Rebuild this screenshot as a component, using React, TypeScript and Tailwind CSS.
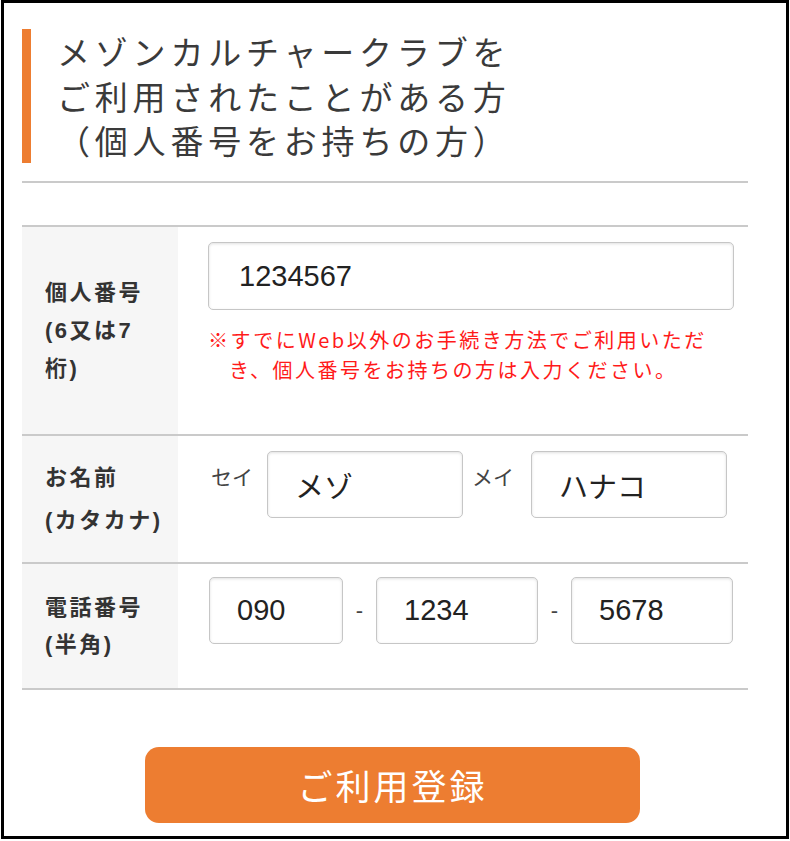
export default function App() {
  const inputCls =
    "h-[67px] rounded-[5px] border border-[#c6c6c6] bg-white pl-[27px] text-[29px] text-[#222] shadow-[inset_0_1px_3px_rgba(0,0,0,0.12)] outline-none";

  return (
    <div className="w-[790px] h-[841px] bg-white font-['Liberation_Sans','Noto_Sans_CJK_JP',sans-serif]">
      <div className="ml-[1px] w-[788px] h-[839px] border-[3px] border-black">
        <div className="ml-[18px] w-[726px] pt-[26px]">
          {/* Title */}
          <div className="flex">
            <div className="w-[9px] bg-[#ed7d31]" />
            <h1 className="pl-[26px] text-[33px] leading-[44.7px] tracking-[4.8px] text-[#3a3a3a] font-normal font-['Noto_Sans_CJK_JP',sans-serif]">
              メゾンカルチャークラブを
              <br />
              ご利用されたことがある方
              <br />
              （個人番号をお持ちの方）
            </h1>
          </div>
          <div className="mt-[18px] h-[2px] bg-[#cacaca]" />

          {/* Form table */}
          <div className="mt-[42px] border-t-2 border-[#cacaca]">
            {/* 個人番号 */}
            <div className="flex h-[209px] border-b-2 border-[#cacaca]">
              <div className="w-[156px] bg-[#f6f6f6] pl-[23px] flex items-center">
                <p className="text-[22px] leading-[38px] tracking-[2.5px] font-bold text-[#333]">
                  個人番号
                  <br />
                  (6又は7
                  <br />
                  桁)
                </p>
              </div>
              <div className="flex-1 pl-[30px] pt-[15px] pr-[14px]">
                <input readOnly value="1234567" className={`${inputCls} w-[526px] h-[68px] pl-[30px]`} />
                <p className="mt-[15px] pl-[21px] [text-indent:-21px] text-[20px] leading-[30px] tracking-[2.5px] text-[#ff1a1a] font-['Noto_Sans_CJK_JP',sans-serif]">
                  ※すでにWeb以外のお手続き方法でご利用いただ
                  <br />
                  き、個人番号をお持ちの方は入力ください。
                </p>
              </div>
            </div>

            {/* お名前 */}
            <div className="flex h-[128px] border-b-2 border-[#cacaca]">
              <div className="w-[156px] bg-[#f6f6f6] pl-[23px] flex items-center">
                <p className="text-[22px] leading-[43px] tracking-[2.5px] font-bold text-[#333]">
                  お名前
                  <br />
                  (カタカナ)
                </p>
              </div>
              <div className="flex-1 flex items-start pl-[33px] pt-[15px]">
                <span className="mt-[15px] text-[21px] leading-[24px] text-[#444]">セイ</span>
                <input readOnly value="メゾ" className={`${inputCls} ml-[14px] w-[196px]`} />
                <span className="ml-[9px] mt-[15px] text-[21px] leading-[24px] text-[#444]">メイ</span>
                <input readOnly value="ハナコ" className={`${inputCls} ml-[17px] w-[196px]`} />
              </div>
            </div>

            {/* 電話番号 */}
            <div className="flex h-[126px] border-b-2 border-[#cacaca]">
              <div className="w-[156px] bg-[#f6f6f6] pl-[23px] flex items-center">
                <p className="text-[22px] leading-[37px] tracking-[2.5px] font-bold text-[#333]">
                  電話番号
                  <br />
                  (半角)
                </p>
              </div>
              <div className="flex-1 flex items-center self-start pl-[31px] pt-[13px]">
                <input readOnly value="090" className={`${inputCls} w-[134px] pl-[26px]`} />
                <span className="w-[33px] text-center text-[22px] text-[#444]">-</span>
                <input readOnly value="1234" className={`${inputCls} w-[162px] pl-[26px]`} />
                <span className="w-[33px] text-center text-[22px] text-[#444]">-</span>
                <input readOnly value="5678" className={`${inputCls} w-[162px] pl-[24px]`} />
              </div>
            </div>
          </div>

          {/* Submit */}
          <button
            type="button"
            className="mt-[57px] ml-[123px] w-[495px] h-[76px] rounded-[14px] bg-[#ed7d31] text-white text-[35px] tracking-[3px] font-['Noto_Sans_CJK_JP',sans-serif]"
          >
            ご利用登録
          </button>
        </div>
      </div>
    </div>
  );
}
